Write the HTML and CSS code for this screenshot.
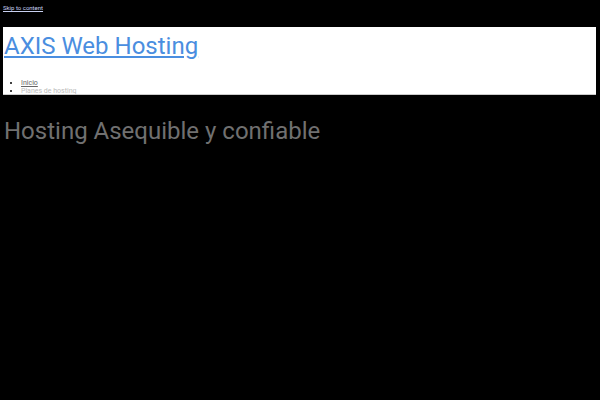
FILE: index.html
```html
<!DOCTYPE html>
<html lang="es">
<head>
<meta charset="utf-8">
<title>AXIS Web Hosting</title>
<link rel="stylesheet" href="styles.css">
</head>
<body>
<a class="skip-link" href="#content">Skip to content</a>
<header class="site-header">
  <h1 class="site-title"><a href="#">AXIS Web Hosting</a></h1>
  <nav class="main-nav">
    <ul class="menu">
      <li><a class="current" href="#">Inicio</a></li>
      <li><a href="#">Planes de hosting</a></li>
    </ul>
  </nav>
</header>
<main id="content" class="content">
  <h2 class="hero-title">Hosting Asequible y confiable</h2>
</main>
</body>
</html>
```
FILE: styles.css
```css
html, body {
  margin: 0;
  padding: 0;
  background: #000;
}
body {
  font-family: Roboto, "Liberation Sans", sans-serif;
  padding: 0 4px 0 3px;
}
.skip-link {
  display: block;
  width: max-content;
  padding-top: 4px;
  margin-bottom: 15px;
  font-size: 6px;
  line-height: 8px;
  color: #c8d0f0;
}
.site-header {
  background: #fff;
  height: 68px;
  overflow: hidden;
  border-bottom: 1px solid #ccc;
  box-sizing: border-box;
}
.site-title {
  margin: 0;
  padding-top: 5px;
  font-size: 24px;
  font-weight: 400;
  line-height: 28px;
}
.site-title a {
  color: #4a8ee0;
  padding-left: 1px;
}
.main-nav {
  margin-top: 19px;
}
.menu {
  margin: 0;
  padding-left: 18px;
  font-size: 7px;
  line-height: 8px;
}
.menu a {
  color: #bbbbbb;
}
.menu a.current {
  color: #666;
}
.content {
  padding-top: 22px;
}
.hero-title {
  margin: 0;
  font-size: 24px;
  font-weight: 400;
  line-height: 28px;
  color: #707070;
  padding-left: 1px;
}
```
